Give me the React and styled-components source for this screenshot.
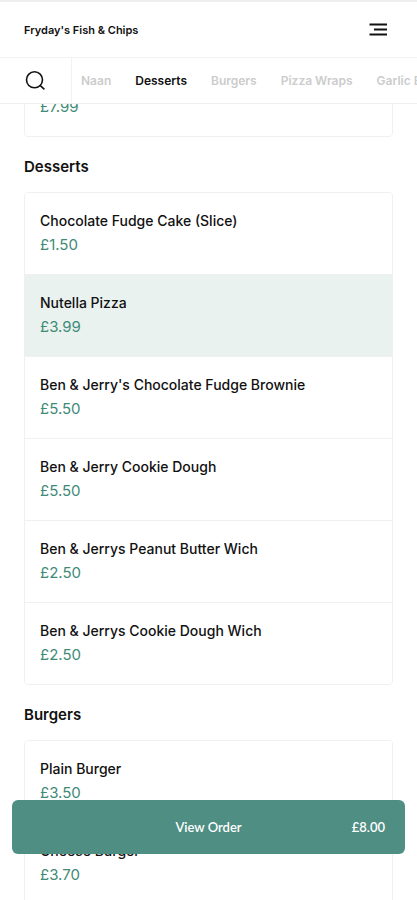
import React, { useState } from 'react'
import styled, { createGlobalStyle } from 'styled-components'

const categories = ['Naan', 'Desserts', 'Burgers', 'Pizza Wraps', 'Garlic Bread']

const menu = [
    {
        title: '',
        items: [{ name: 'Naan', price: '£7.99' }],
    },
    {
        title: 'Desserts',
        items: [
            { name: 'Chocolate Fudge Cake (Slice)', price: '£1.50' },
            { name: 'Nutella Pizza', price: '£3.99' },
            { name: "Ben & Jerry's Chocolate Fudge Brownie", price: '£5.50' },
            { name: 'Ben & Jerry Cookie Dough', price: '£5.50' },
            { name: 'Ben & Jerrys Peanut Butter Wich', price: '£2.50' },
            { name: 'Ben & Jerrys Cookie Dough Wich', price: '£2.50' },
        ],
    },
    {
        title: 'Burgers',
        items: [
            { name: 'Plain Burger', price: '£3.50' },
            { name: 'Cheese Burger', price: '£3.70' },
        ],
    },
]

const App = () => {
    const [category, setCategory] = useState('Desserts')
    const [selected, setSelected] = useState('Nutella Pizza')

    return (
        <>
            <GlobalStyle />
            <Header>
                <TopBar>
                    <Brand>Fryday's Fish &amp; Chips</Brand>
                    <IconButton type="button" aria-label="Menu">
                        <svg width="18" height="14" viewBox="0 0 18 14" fill="none" stroke="#111" strokeWidth="1.8">
                            <path d="M0.5 1.5H18M5 6.5H18M0.5 11.5H18" />
                        </svg>
                    </IconButton>
                </TopBar>
                <CategoryBar>
                    <SearchButton type="button" aria-label="Search">
                        <svg width="20" height="20" viewBox="0 0 20 20" fill="none" stroke="#111" strokeWidth="1.6">
                            <circle cx="9.5" cy="8.8" r="8" />
                            <path d="M14.8 14.2L19.4 18.4" />
                        </svg>
                    </SearchButton>
                    <Tabs>
                        {categories.map(item => (
                            <Tab
                                key={item}
                                type="button"
                                $active={item === category}
                                onClick={() => setCategory(item)}
                            >
                                {item}
                            </Tab>
                        ))}
                    </Tabs>
                </CategoryBar>
            </Header>

            <Main>
                {menu.map(section => (
                    <section key={section.title}>
                        {section.title && <SectionTitle>{section.title}</SectionTitle>}
                        <Card>
                            {section.items.map(item => (
                                <Item
                                    key={item.name}
                                    type="button"
                                    $selected={item.name === selected}
                                    onClick={() => setSelected(item.name)}
                                >
                                    <ItemName>{item.name}</ItemName>
                                    <ItemPrice>{item.price}</ItemPrice>
                                </Item>
                            ))}
                        </Card>
                    </section>
                ))}
            </Main>

            <OrderButton type="button">
                <OrderLabel>View Order</OrderLabel>
                <OrderTotal>£8.00</OrderTotal>
            </OrderButton>
        </>
    )
}

export default App

const GlobalStyle = createGlobalStyle`
    * {
        box-sizing: border-box;
    }
    html {
        scrollbar-width: none;
    }
    body {
        margin: 0;
        background: #fff;
        color: #111;
        font-family: Inter, "Liberation Sans", sans-serif;
    }
    button {
        border: none;
        background: none;
        padding: 0;
        color: inherit;
        font-family: inherit;
        cursor: pointer;
    }
`

const Header = styled.header`
    position: fixed;
    top: 0;
    left: 0;
    right: 0;
    z-index: 1;
    background: #fff;
    border-top: 2px solid #eee;
`

const TopBar = styled.div`
    display: flex;
    align-items: center;
    justify-content: space-between;
    height: 56px;
    padding: 0 30px 0 24px;
    border-bottom: 1px solid #f2f2f2;
`

const Brand = styled.h1`
    margin: 0;
    font-size: 11px;
    font-weight: 600;
    line-height: 16px;
`

const IconButton = styled.button`
    display: flex;
`

const CategoryBar = styled.div`
    display: flex;
    height: 46px;
    border-bottom: 1px solid #eee;
`

const SearchButton = styled.button`
    display: flex;
    align-items: center;
    justify-content: center;
    flex: none;
    width: 72px;
    padding-right: 2px;
    border-right: 1px solid #f2f2f2;
`

const Tabs = styled.nav`
    display: flex;
    flex: 1;
    gap: 24px;
    padding-left: 9px;
    overflow: hidden;
`

const Tab = styled.button`
    flex: none;
    color: ${props => props.$active ? '#111' : '#ccc'};
    font-size: 12px;
    font-weight: 600;
    line-height: 16px;
`

const Main = styled.main`
    padding: 54px 24px 120px;
`

const SectionTitle = styled.h2`
    margin: 0;
    padding: 20px 0 15px;
    font-size: 15px;
    font-weight: 600;
    line-height: 20px;
`

const Card = styled.div`
    border: 1px solid #f0f0f0;
    border-radius: 4px;
    overflow: hidden;
`

const Item = styled.button`
    display: flex;
    flex-direction: column;
    justify-content: center;
    gap: 4px;
    width: 100%;
    height: 82px;
    padding: 0 15px 2px;
    border-bottom: 1px solid #f0f0f0;
    background: ${props => props.$selected ? '#eaf2f0' : '#fff'};
    text-align: left;

    &:last-child {
        height: 81px;
        border-bottom: none;
    }
`

const ItemName = styled.span`
    font-size: 14px;
    font-weight: 500;
    line-height: 20px;
`

const ItemPrice = styled.span`
    color: #3f8a76;
    font-size: 15px;
    line-height: 20px;
`

const OrderButton = styled.button`
    position: fixed;
    left: 12px;
    right: 12px;
    bottom: 46px;
    z-index: 1;
    display: grid;
    grid-template-columns: 1fr auto 1fr;
    align-items: center;
    height: 54px;
    padding: 0 20px;
    border-radius: 6px;
    background: #4e8e83;
    color: #fff;
    font-family: Lato, "Liberation Sans", sans-serif;
    font-size: 13px;
    font-weight: 600;
`

const OrderLabel = styled.span`
    grid-column: 2;
`

const OrderTotal = styled.span`
    text-align: right;
`
